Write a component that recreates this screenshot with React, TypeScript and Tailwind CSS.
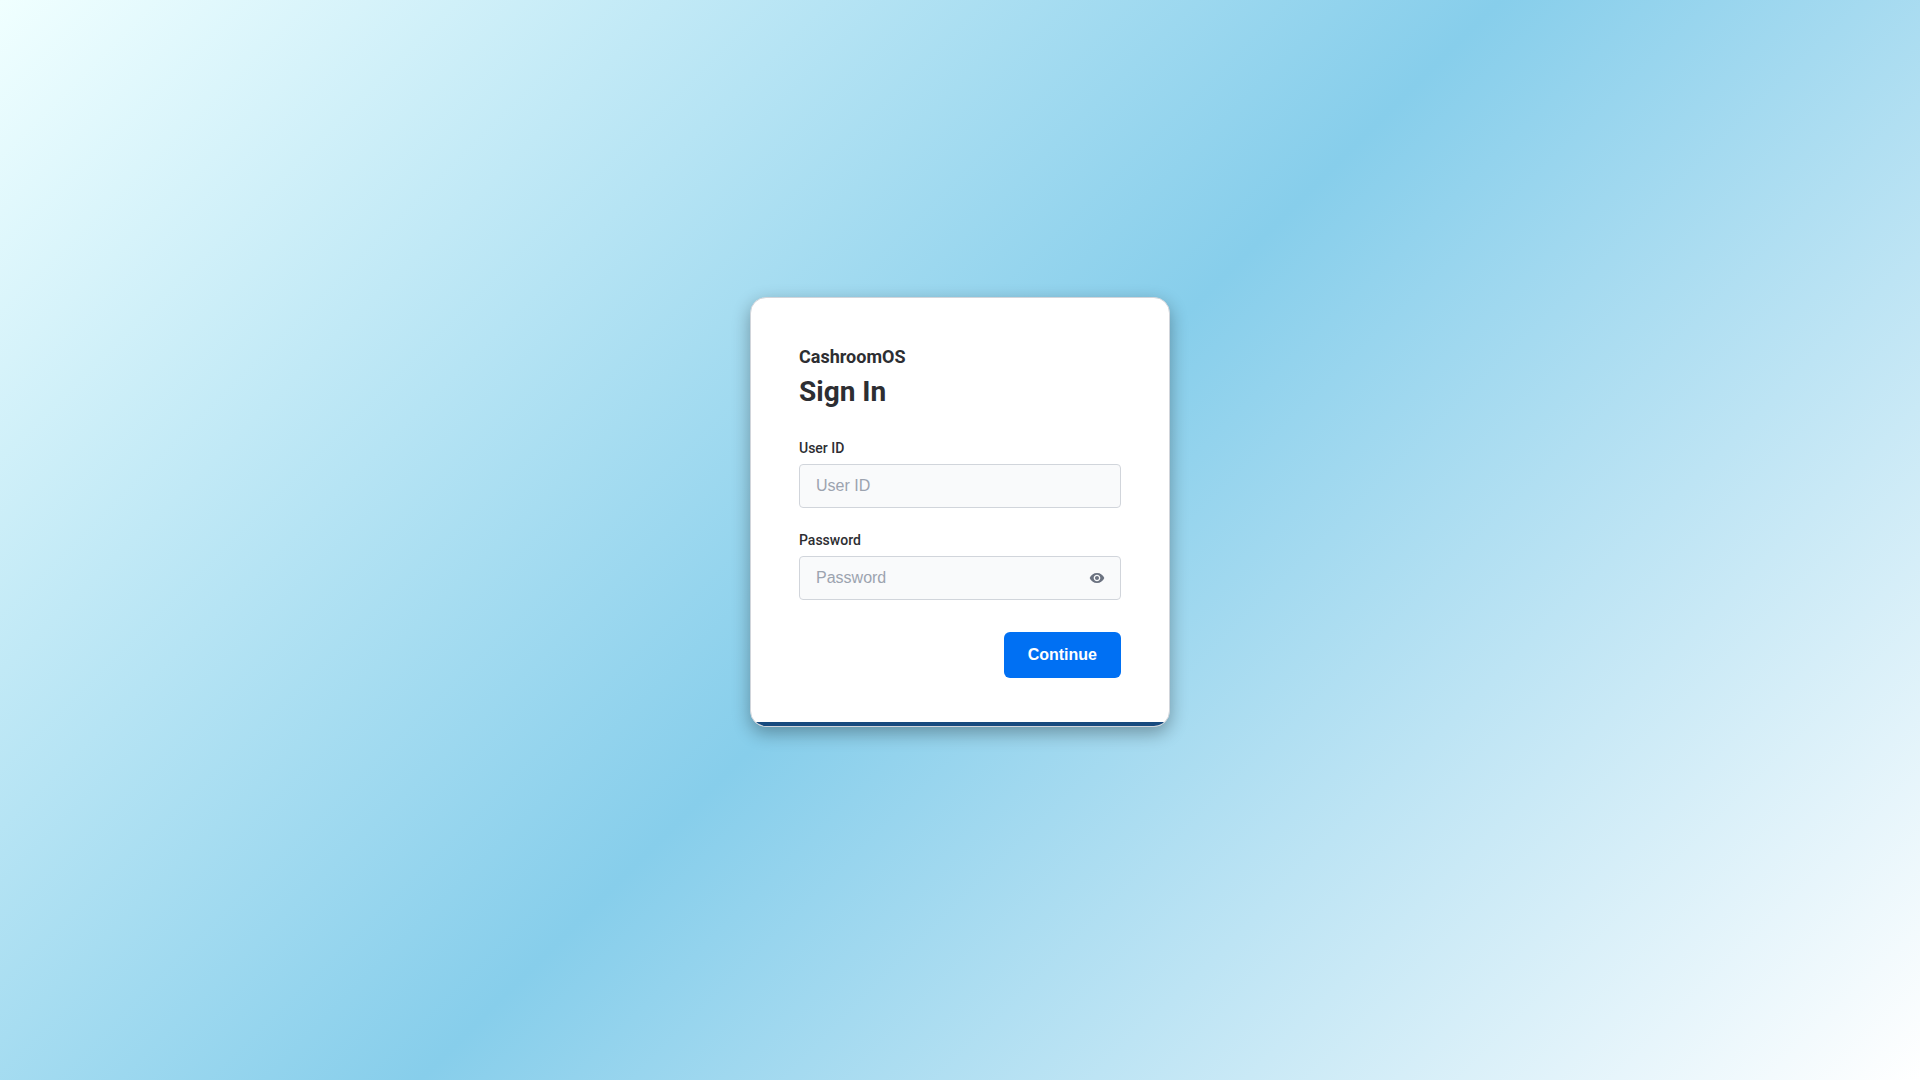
import { useState } from "react";
import { MdVisibility, MdVisibilityOff } from "react-icons/md";

const labelClass = "text-sm leading-4 font-medium text-[#2d2e32]";
const inputClass =
  "h-11 w-full rounded border border-[#d1d5db] bg-[#f9fafb] px-4 font-['Liberation_Sans',sans-serif] text-base text-[#2d2e32] placeholder:text-[#9ca3af]";

export default function App() {
  const [showPassword, setShowPassword] = useState(false);

  return (
    <main className="flex min-h-screen items-center justify-center bg-[linear-gradient(135deg,#f0ffff,#87ceeb,#ffffff)] pb-14 font-['Roboto',sans-serif] text-[#2d2e32]">
      <div className="w-full max-w-105 overflow-hidden rounded-2xl border border-[#d1d5db] bg-white shadow-[0_6px_18px_rgba(0,0,0,0.32)]">
        <form className="border-b-4 border-[#174a7e] px-12 pt-12 pb-11" onSubmit={(e) => e.preventDefault()}>
          <h2 className="text-lg leading-[22px] font-bold">CashroomOS</h2>
          <h1 className="mt-1 text-[28px] leading-10 font-bold">Sign In</h1>

          <div className="mt-7 flex flex-col gap-2">
            <label htmlFor="userId" className={labelClass}>User ID</label>
            <input id="userId" type="text" placeholder="User ID" className={inputClass} />
          </div>

          <div className="mt-6 flex flex-col gap-2">
            <label htmlFor="password" className={labelClass}>Password</label>
            <div className="relative">
              <input
                id="password"
                type={showPassword ? "text" : "password"}
                placeholder="Password"
                className={`${inputClass} pr-12`}
              />
              <button
                type="button"
                aria-label="Toggle password visibility"
                onClick={() => setShowPassword(!showPassword)}
                className="absolute inset-y-0 right-4 flex items-center text-[#6b7280]"
              >
                {showPassword ? <MdVisibilityOff className="size-4" /> : <MdVisibility className="size-4" />}
              </button>
            </div>
          </div>

          <div className="mt-8 flex justify-end">
            <button
              type="submit"
              className="rounded-md bg-[#0070f3] px-6 py-[11px] font-['Liberation_Sans',sans-serif] text-base leading-6 font-bold text-white"
            >
              Continue
            </button>
          </div>
        </form>
      </div>
    </main>
  );
}
